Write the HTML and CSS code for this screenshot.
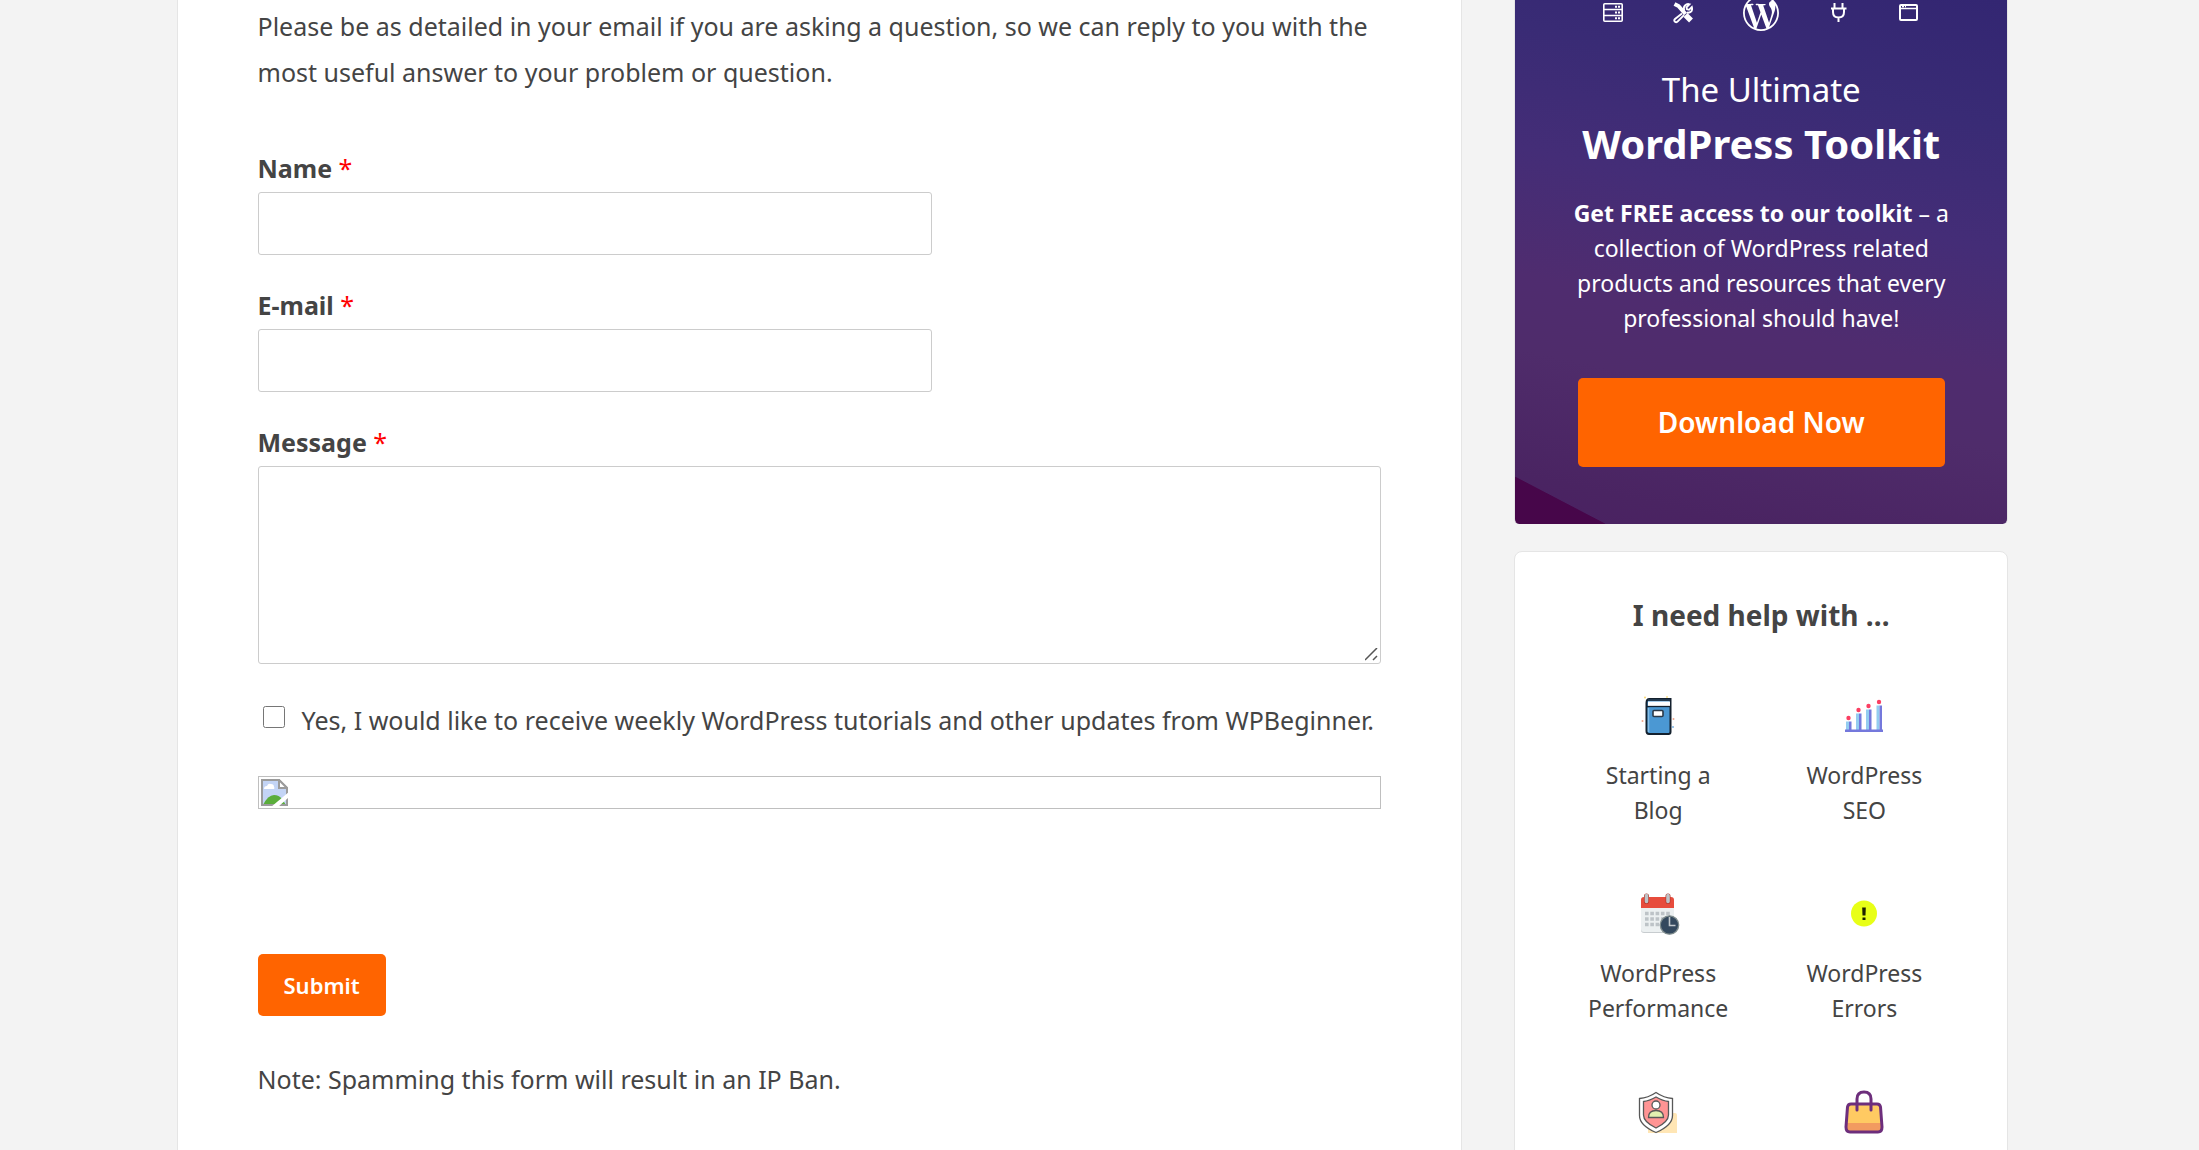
FILE: index.html
```html
<!DOCTYPE html>
<html lang="en">
<head>
<meta charset="utf-8">
<title>Contact WPBeginner</title>
<meta name="viewport" content="width=device-width, initial-scale=1">
<link rel="stylesheet" href="styles.css">
</head>
<body>
<div class="page">
  <main class="content">
    <p class="text">Please be as detailed in your email if you are asking a question, so we can reply to you with the most useful answer to your problem or question.</p>
    <form class="form">
      <div class="field">
        <label class="label" for="name">Name <span class="required">*</span></label>
        <input class="input" type="text" id="name">
      </div>
      <div class="field">
        <label class="label" for="email">E-mail <span class="required">*</span></label>
        <input class="input" type="email" id="email">
      </div>
      <div class="field">
        <label class="label" for="message">Message <span class="required">*</span></label>
        <textarea class="input textarea" id="message"></textarea>
      </div>
      <div class="optin">
        <input class="checkbox" type="checkbox" id="optin">
        <label for="optin">Yes, I would like to receive weekly WordPress tutorials and other updates from WPBeginner.</label>
      </div>
      <div class="missing-image">
        <svg width="27" height="27" viewBox="0 0 27 27" aria-hidden="true">
          <path d="M1 1h17l8 8v17H1z" fill="#c3d4f5"/>
          <path d="M3 10q0-3 3-3 1-3 4-2 3 0 3 3 1 1 0 2z" fill="#fff"/>
          <path d="M2 26q5-10 11-10 5 0 8 4l4 6z" fill="#5aad3b"/>
          <path d="M1 1h17l8 8v17H1z" fill="none" stroke="#9b9b9b" stroke-width="2"/>
          <path d="M18 1v8h8z" fill="#fff" stroke="#9b9b9b" stroke-width="2"/>
          <path d="M10 28L28 13v5L17 28z" fill="#fff"/>
        </svg>
      </div>
      <button class="submit" type="submit">Submit</button>
    </form>
    <p class="text">Note: Spamming this form will result in an IP Ban.</p>
  </main>

  <aside class="sidebar">
    <section class="promo">
      <div class="promo-icons">
        <svg width="20" height="25" viewBox="0 0 20 25" fill="none" stroke="#fff" stroke-width="1.6" aria-hidden="true">
          <rect x="0.8" y="3.8" width="18.4" height="17.4" rx="1"/><path d="M1 9.5h18M1 15.5h18"/><path d="M12 6.7h2m1 0h2M12 12.5h2m1 0h2M12 18.3h2m1 0h2" stroke-width="2"/>
        </svg>
        <svg width="20" height="25" viewBox="0 0 20 25" fill="none" stroke="#fff" aria-hidden="true">
          <path d="M9 13.5l-7 5.500q-1.500 1.500 0 2.700t3-.5l6-6M11.500 10.500q-1.500-3 .5-5 2-2 4.500-1.200l-3 3 .5 2 2 .5L18.800 7q1 4-1.500 5.200-2 1-3.500.2" stroke-width="1.900"/>
          <path d="M1.500 4l4 2 7 8" stroke-width="4"/><path d="M12.500 15l5.500 5.500" stroke-width="5.500"/>
        </svg>
        <svg width="36" height="31" viewBox="0 3.33 24 20.67" fill="#fff" aria-hidden="true">
          <path d="M21.469 6.825c.84 1.537 1.318 3.3 1.318 5.175 0 3.979-2.156 7.456-5.363 9.325l3.295-9.527c.615-1.54.82-2.771.82-3.864 0-.405-.026-.78-.07-1.11m-7.981.105c.647-.03 1.232-.105 1.232-.105.582-.075.514-.93-.067-.899 0 0-1.755.135-2.88.135-1.064 0-2.85-.15-2.85-.15-.585-.03-.661.855-.075.885 0 0 .54.061 1.125.09l1.68 4.605-2.37 7.08L5.354 6.9c.649-.03 1.234-.1 1.234-.1.585-.075.516-.93-.065-.896 0 0-1.746.138-2.874.138-.2 0-.438-.008-.69-.015C4.911 3.15 8.235 1.215 12 1.215c2.809 0 5.365 1.072 7.286 2.833-.046-.003-.091-.009-.141-.009-1.06 0-1.812.923-1.812 1.914 0 .89.513 1.643 1.06 2.531.411.72.89 1.643.89 2.977 0 .915-.354 1.994-.821 3.479l-1.075 3.585-3.9-11.61.001.014zM12 22.784c-1.059 0-2.081-.153-3.048-.437l3.237-9.406 3.315 9.087c.024.053.05.101.078.149-1.12.393-2.325.609-3.582.609M1.211 12c0-1.564.336-3.05.935-4.39L7.29 21.709C3.694 19.96 1.212 16.271 1.211 12M12 0C5.385 0 0 5.385 0 12s5.385 12 12 12 12-5.385 12-12S18.615 0 12 0"/>
        </svg>
        <svg width="20" height="25" viewBox="0 0 20 25" fill="none" stroke="#fff" stroke-width="2" aria-hidden="true">
          <path d="M5.500 3v5M13.500 3v5M2 8.500h15.500M4 9v3q0 5.500 5.500 5.500t5.500-5.500V9M9.500 18v4"/>
        </svg>
        <svg width="20" height="25" viewBox="0 0 20 25" fill="none" stroke="#fff" stroke-width="2" aria-hidden="true">
          <rect x="1" y="5" width="17" height="15" rx="1"/><path d="M1 8.500h17M3 6.500h2m1 0h1" stroke-width="1.500"/>
        </svg>
      </div>
      <h2 class="promo-title">The Ultimate <strong>WordPress Toolkit</strong></h2>
      <p class="promo-text"><strong>Get FREE access to our toolkit</strong> – a collection of WordPress related products and resources that every professional should have!</p>
      <a class="download" href="#">Download Now</a>
    </section>

    <section class="help">
      <h3 class="help-title">I need help with …</h3>
      <div class="topics">
        <a class="topic" href="#">
          <svg width="48" height="48" viewBox="0 0 48 48" aria-hidden="true">
            <path d="M12.500 12q0-4 3-4h21v33q0 2-2 2H15q-2.500 0-2.500-3z" fill="#4b98d3" stroke="#14212e" stroke-width="2"/>
            <path d="M14 10.500h22v4.500H14z" fill="#fff"/><path d="M13 15.500h23" stroke="#14212e" stroke-width="1.300"/><path d="M14 9h22" stroke="#22384d" stroke-width="2"/>
            <path d="M14.500 17v24" stroke="#85bde6" stroke-width="1.500"/>
            <rect x="19" y="19.500" width="10" height="6" rx="1" fill="#fff" stroke="#2b3947" stroke-width="1.600"/>
            <circle cx="11" cy="6.500" r="1" fill="#fbd971"/><circle cx="33" cy="6" r="1" fill="#fbe28d"/><circle cx="8.500" cy="30" r="1" fill="#f0a48a"/><circle cx="39.500" cy="28" r="1" fill="#f0a48a"/><circle cx="39" cy="36" r="1" fill="#7db5e6"/>
          </svg>
          <span>Starting a Blog</span>
        </a>
        <a class="topic" href="#">
          <svg width="48" height="48" viewBox="0 0 48 48" aria-hidden="true">
            <path d="M6 30.500h3V39H6zM16 22.500h3V39h-3zM26 18.500h3V39h-3zM36.500 14.500h3V39h-3z" fill="#94cdf0"/>
            <path d="M9 30.500h2.500V39H9zM19 22.500h2.500V39H19zM29 18.500h2.500V39H29zM39.500 14.500H42V39h-2.500zM5 38.500h38V41H5z" fill="#7478dc"/>
            <g fill="#fb3f62"><circle cx="8.500" cy="27" r="2.200"/><circle cx="18.500" cy="19" r="2.200"/><circle cx="28.500" cy="15" r="2.200"/><circle cx="39" cy="11" r="2.200"/></g>
          </svg>
          <span>WordPress SEO</span>
        </a>
        <a class="topic" href="#">
          <svg width="48" height="48" viewBox="0 0 48 48" aria-hidden="true">
            <rect x="7" y="9" width="33" height="35" rx="3" fill="#c7cccf"/><rect x="7" y="8" width="33" height="35" rx="3" fill="#ecf0f1"/>
            <path d="M7 19v-8q0-3 3-3h27q3 0 3 3v8z" fill="#e74c3c"/>
            <path d="M12.500 7v5.500M34 7v5.500" stroke="#b43b31" stroke-width="5" stroke-linecap="round"/><path d="M12.500 6.500v6M34 6.500v6" stroke="#bdc3c7" stroke-width="3.600" stroke-linecap="round"/>
            <path d="M11 24.500h25.500M11 30h25.500M11 35.500h25.500" stroke="#bdc3c7" stroke-width="3.600" stroke-dasharray="3.600 1.700"/>
            <circle cx="35.500" cy="36" r="9.200" fill="#34495e" stroke="#7f8c8d" stroke-width="1.300"/><path d="M35.500 28v8.500h6" fill="none" stroke="#c3c9cd" stroke-width="1.600"/>
          </svg>
          <span>WordPress Performance</span>
        </a>
        <a class="topic" href="#">
          <svg width="48" height="48" viewBox="0 0 48 48" aria-hidden="true">
            <circle cx="24" cy="24.500" r="13" fill="#e8ff17"/><path d="M22.200 18.500h3.600l-.3 8h-3z" fill="#1d2000"/><path d="M22.500 28.500h3v2.500h-3z" fill="#1d2000"/>
          </svg>
          <span>WordPress Errors</span>
        </a>
        <a class="topic" href="#">
          <svg width="48" height="48" viewBox="0 0 48 48" aria-hidden="true">
            <path d="M14 26h27q2 0 2 2v18H14z" fill="#ffe6b5"/>
            <g stroke="#585858" stroke-width="1.300"><path d="M22 5.500q8 5.500 16.500 6v17q0 10-16.500 17Q5.500 38.500 5.500 28.500v-17Q14 11 22 5.500z" fill="#fff"/>
            <path d="M22 10q7 4 12.500 4.500V28q0 7-12.500 13Q9.500 35 9.500 28V14.500Q15 14 22 10z" fill="#ff9494"/>
            <circle cx="22" cy="18" r="4" fill="#fff"/><path d="M14.500 30.500q0-7 7.500-7t7.500 7z" fill="#e2f0b0"/></g>
          </svg>
        </a>
        <a class="topic" href="#">
          <svg width="48" height="48" viewBox="0 0 48 48" aria-hidden="true">
            <path d="M11 17h26q3 0 3.500 3L42 40q0 5-4 5H10q-4 0-4-5l1.500-20q.5-3 3.500-3z" fill="#ffca62"/>
            <path d="M6.500 36h35v5q0 4-4 4h-27q-4 0-4-4z" fill="#f29b60"/>
            <path d="M11 17h26q3 0 3.500 3L42 40q0 5-4 5H10q-4 0-4-5l1.500-20q.5-3 3.500-3z" fill="none" stroke="#6d2e7c" stroke-width="3"/>
            <path d="M17 23V12q0-7 7-7t7 7v11" fill="none" stroke="#6d2e7c" stroke-width="3" stroke-linecap="round"/>
          </svg>
        </a>
      </div>
    </section>
  </aside>
</div>
</body>
</html>
```

FILE: styles.css
```css
* {
  box-sizing: border-box;
}

html {
  height: 100%;
}

body {
  height: 100%;
  margin: 0;
  overflow: hidden;
  background: #f3f3f3;
  color: #444;
  font: 25px/46px "Noto Sans", "Open Sans", sans-serif;
}

.page {
  display: grid;
  grid-template-columns: minmax(0, 13fr) minmax(0, 5fr);
  gap: 52px;
  max-width: 1846px;
  margin: 0 auto;
  padding-right: 14px;
}

.content {
  padding: 3px 80px 48px;
  background: #fff;
  border: solid #e5e5e5;
  border-width: 0 1px;
}

.text {
  margin: 0;
}

.form {
  display: flex;
  flex-direction: column;
  align-items: flex-start;
  margin: 56px 0 40px;
}

.field {
  width: 100%;
  margin-bottom: 33px;
}

.label {
  display: block;
  padding-bottom: 6px;
  font-weight: 700;
  line-height: 35px;
}

.required {
  color: #f00;
  font-weight: 400;
}

.input {
  display: block;
  width: 60%;
  height: 63px;
  padding: 8px 12px;
  background: #fff;
  border: 1px solid #ccc;
  border-radius: 3px;
  font: inherit;
}

.textarea {
  width: 100%;
  height: 198px;
  resize: vertical;
}

.textarea::-webkit-resizer {
  background: url("data:image/svg+xml,%3Csvg xmlns='http://www.w3.org/2000/svg' width='15' height='15'%3E%3Cpath d='M0 12L12 0M8 12l4-4' stroke='%23555' stroke-width='1.500'/%3E%3C/svg%3E") no-repeat;
}

.optin {
  display: flex;
  align-items: center;
  gap: 17px;
  padding-left: 5px;
}

.checkbox {
  width: 22px;
  height: 22px;
  margin: 0 0 6px;
}

.missing-image {
  width: 100%;
  height: 33px;
  margin: 33px 0 145px;
  padding: 2px;
  border: 1px solid #bfbfbf;
}

.missing-image svg {
  display: block;
}

.submit {
  padding: 15px 26px;
  background: #ff6400;
  border: 0;
  border-radius: 5px;
  color: #fff;
  font: 600 22px/32px "Noto Sans", "Open Sans", sans-serif;
}

.sidebar {
  display: flex;
  flex-direction: column;
  gap: 27px;
}

.promo {
  display: flex;
  flex-direction: column;
  align-items: center;
  padding: 0 50px 57px;
  border: solid #e5e5e5;
  border-width: 0 1px;
  border-radius: 0 0 5px 5px;
  background:
    linear-gradient(to top right, #47064a 50%, transparent 51%) left bottom / 90px 47px no-repeat,
    linear-gradient(192deg, #332672 0%, #392b75 20%, #442d77 40%, #4f2c6f 60%, #4f2c6b 72%, #4a2462 92%, #4a2161 100%);
  color: #fff;
  text-align: center;
}

.promo-icons {
  display: flex;
  align-items: flex-start;
  gap: 50px;
}

.promo-title {
  margin: 32px 0 25px;
  font-size: 33px;
  font-weight: 400;
  line-height: 54px;
}

.promo-title strong {
  display: block;
  font-size: 40px;
  font-weight: 700;
}

.promo-text {
  margin: 0 0 42px;
  font-size: 23px;
  line-height: 35px;
}

.download {
  padding: 22px 80px;
  background: #ff6400;
  border-radius: 5px;
  color: #fff;
  font-size: 28px;
  font-weight: 600;
  line-height: 45px;
  text-decoration: none;
}

.help {
  flex: 1;
  padding: 43px 40px;
  background: #fff;
  border: 1px solid #e5e5e5;
  border-radius: 8px;
}

.help-title {
  margin: 0 0 56px;
  font-size: 28px;
  line-height: 40px;
  text-align: center;
}

.topics {
  display: grid;
  grid-template-columns: 1fr 1fr;
  row-gap: 61px;
}

.topic {
  display: flex;
  flex-direction: column;
  align-items: center;
  gap: 19px;
  padding: 0 28px;
  color: #444;
  font-size: 23px;
  line-height: 35px;
  text-align: center;
  text-decoration: none;
}
```
